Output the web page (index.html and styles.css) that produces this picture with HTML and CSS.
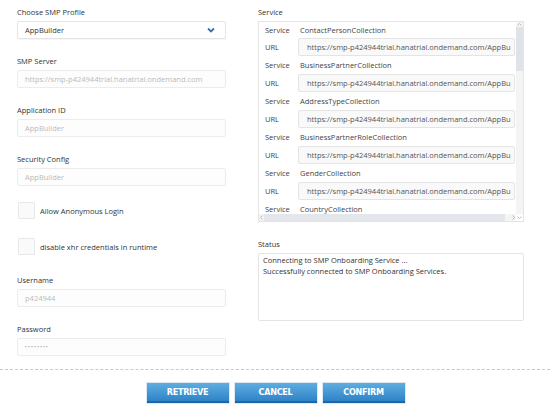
FILE: index.html
```html
<!DOCTYPE html>
<html>
<head>
<meta charset="utf-8">
<link rel="stylesheet" href="styles.css">
</head>
<body>
<div class="page">
  <div class="main">
    <div class="left">
      <div class="label">Choose SMP Profile</div>
      <div class="select"><span>AppBuilder</span>
        <svg class="chev" width="8" height="6" viewBox="0 0 8 6"><path d="M1 1.5 L4 4.5 L7 1.5" fill="none" stroke="#3b6fa8" stroke-width="1.8"/></svg>
      </div>
      <div class="label">SMP Server</div>
      <div class="input">https://smp-p424944trial.hanatrial.ondemand.com</div>
      <div class="label">Application ID</div>
      <div class="input">AppBuilder</div>
      <div class="label">Security Config</div>
      <div class="input">AppBuilder</div>
      <div class="check first"><span class="box"></span><span>Allow Anonymous Login</span></div>
      <div class="check"><span class="box"></span><span>disable xhr credentials in runtime</span></div>
      <div class="label">Username</div>
      <div class="input">p424944</div>
      <div class="label">Password</div>
      <div class="input pw">••••••••</div>
    </div>
    <div class="right">
      <div class="label">Service</div>
      <div class="svcbox">
        <div class="svclist">
          <div class="row top"><span class="k">Service</span><span class="v">ContactPersonCollection</span></div>
          <div class="row"><span class="k">URL</span><span class="url">https://smp-p424944trial.hanatrial.ondemand.com/AppBu</span></div>
          <div class="row"><span class="k">Service</span><span class="v">BusinessPartnerCollection</span></div>
          <div class="row"><span class="k">URL</span><span class="url">https://smp-p424944trial.hanatrial.ondemand.com/AppBu</span></div>
          <div class="row"><span class="k">Service</span><span class="v">AddressTypeCollection</span></div>
          <div class="row"><span class="k">URL</span><span class="url">https://smp-p424944trial.hanatrial.ondemand.com/AppBu</span></div>
          <div class="row"><span class="k">Service</span><span class="v">BusinessPartnerRoleCollection</span></div>
          <div class="row"><span class="k">URL</span><span class="url">https://smp-p424944trial.hanatrial.ondemand.com/AppBu</span></div>
          <div class="row"><span class="k">Service</span><span class="v">GenderCollection</span></div>
          <div class="row"><span class="k">URL</span><span class="url">https://smp-p424944trial.hanatrial.ondemand.com/AppBu</span></div>
          <div class="row"><span class="k">Service</span><span class="v">CountryCollection</span></div>
        </div>
        <div class="vbar">
          <svg class="arr" width="7" height="5" viewBox="0 0 7 5"><path d="M1.5 3.5 L3.5 1.5 L5.5 3.5" fill="none" stroke="#aaa" stroke-width="0.8"/></svg>
          <div class="vthumb"></div>
        </div>
        <div class="hbar">
          <svg class="arr" width="5" height="7" viewBox="0 0 5 7"><path d="M3.5 1.5 L1.5 3.5 L3.5 5.5" fill="none" stroke="#aaa" stroke-width="0.8"/></svg>
          <div class="hthumb"></div>
          <svg class="arr" width="5" height="7" viewBox="0 0 5 7"><path d="M1.5 1.5 L3.5 3.5 L1.5 5.5" fill="none" stroke="#aaa" stroke-width="0.8"/></svg>
        </div>
        <div class="corner">
          <svg width="7" height="7" viewBox="0 0 7 7"><path d="M1.5 2.5 L3.5 4.5 L5.5 2.5" fill="none" stroke="#aaa" stroke-width="0.8"/></svg>
        </div>
      </div>
      <div class="label status-label">Status</div>
      <div class="status">Connecting to SMP Onboarding Service ...<br>Successfully connected to SMP Onboarding Services.</div>
    </div>
  </div>
  <div class="divider"></div>
  <div class="buttons">
    <button class="btn">RETRIEVE</button>
    <button class="btn">CANCEL</button>
    <button class="btn">CONFIRM</button>
  </div>
</div>
</body>
</html>
```
FILE: styles.css
```css
html, body {
  margin: 0;
  padding: 0;
  background: #fff;
}
body {
  font-family: "Open Sans", "Liberation Sans", sans-serif;
  font-size: 7.5px;
  color: #333;
  width: 550px;
  height: 412px;
  overflow: hidden;
}
.main {
  display: flex;
  box-sizing: border-box;
  padding: 6px 0 0 17px;
  gap: 32px;
  height: 357px;
}
.left {
  width: 209px;
}
.right {
  width: 266px;
}
.label {
  height: 12px;
  line-height: 12px;
  margin-bottom: 3px;
  color: #333;
}
.select, .input {
  height: 18px;
  box-sizing: border-box;
  border: 1px solid #ececec;
  border-radius: 2px;
  background: #fdfdfd;
  padding: 0 7px;
  line-height: 16px;
  margin-bottom: 16px;
  white-space: nowrap;
  overflow: hidden;
}
.select {
  display: flex;
  justify-content: space-between;
  align-items: center;
  color: #333;
  background: #fff;
  border-color: #e4e4e4;
  box-shadow: 0 1px 1px rgba(0,0,0,0.04);
}
.chev {
  margin-right: 3px;
}
.input {
  color: #bbb;
}
.input.pw {
  font-size: 5px;
  letter-spacing: 1.1px;
  color: #999;
  line-height: 16px;
}
.check {
  display: flex;
  align-items: center;
  height: 17px;
  gap: 5px;
  margin: 0 0 19px 1px;
}
.check.first {
  margin-top: 1px;
}
.box {
  width: 17px;
  height: 17px;
  box-sizing: border-box;
  border: 1px solid #e8e8e8;
  background: #fafafa;
  border-radius: 1px;
}
.svcbox {
  height: 201px;
  box-sizing: border-box;
  border: 1px solid #e4e4e4;
  display: grid;
  grid-template-columns: 1fr 7px;
  grid-template-rows: 1fr 7px;
  overflow: hidden;
}
.svclist {
  overflow: hidden;
  padding: 0 0 0 6px;
}
.row {
  display: flex;
  align-items: center;
  height: 18px;
  white-space: nowrap;
}
.row.top {
  height: 16px;
}
.k {
  width: 35px;
  flex: none;
  color: #444;
}
.v {
  color: #444;
}
.url {
  flex: none;
  width: 217px;
  box-sizing: border-box;
  height: 18px;
  border: 1px solid #e4e4e4;
  border-radius: 2px;
  background: #f9f9f9;
  padding: 0 8px;
  line-height: 16px;
  color: #555;
  overflow: hidden;
  margin-left: -2px;
}
.vbar {
  background: #f4f4f4;
  display: flex;
  flex-direction: column;
  align-items: center;
}
.vbar .arr {
  flex: none;
}
.vthumb {
  width: 7px;
  height: 44px;
  background: #dfe3e8;
}
.hbar {
  background: #f4f4f4;
  display: flex;
  align-items: center;
}
.hthumb {
  flex: 1;
  height: 7px;
  background: #e3e6ea;
  margin-right: 6px;
}
.corner {
  background: #fff;
  display: flex;
  align-items: center;
  justify-content: center;
}
.status-label {
  margin-top: 16px;
}
.status {
  height: 68px;
  box-sizing: border-box;
  border: 1px solid #e4e4e4;
  border-radius: 2px;
  padding: 1px 4px;
  line-height: 11px;
  color: #333;
}
.divider {
  border-top: 1px dashed #c8c8c8;
  margin-top: 12px;
}
.buttons {
  display: flex;
  justify-content: center;
  gap: 6px;
  margin-top: 13px;
  padding-left: 1px;
}
.btn {
  width: 82px;
  height: 20px;
  box-sizing: border-box;
  border: none;
  border-bottom: 2px solid #1d66a8;
  background: linear-gradient(#5eaee2, #2f82c6);
  color: #fff;
  font-family: "DejaVu Sans Condensed", "DejaVu Sans", sans-serif;
  font-weight: bold;
  font-size: 9px;
  letter-spacing: -0.3px;
  padding: 0;
  box-shadow: 0 0 0 1px rgba(30,100,170,0.15);
}
```
